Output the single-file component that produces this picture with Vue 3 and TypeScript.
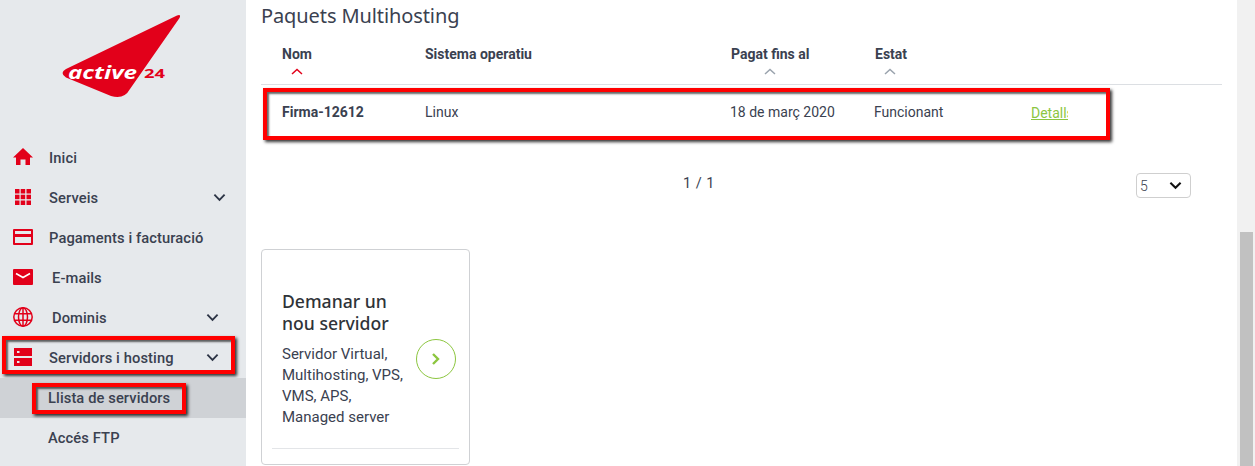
<script setup lang="ts">
const rows = [
  { name: "Firma-12612", os: "Linux", paid: "18 de març 2020", status: "Funcionant" },
];
const columns = [
  { label: "Nom", sortable: true, active: true },
  { label: "Sistema operatiu", sortable: false, active: false },
  { label: "Pagat fins al", sortable: true, active: false },
  { label: "Estat", sortable: true, active: false },
];
</script>

<template>
  <div class="page">
    <aside class="sidebar">
      <div class="logo">
        <svg width="246" height="138" viewBox="0 0 246 138">
          <path d="M177 15.500 Q181.500 14 179.500 18 L130 89 Q124 100 111 96 L66 77.500 Q59 73 66 69 Z" fill="#e2001a" />
          <text x="68" y="79" class="logo-word" textLength="69" lengthAdjust="spacingAndGlyphs">active</text>
          <text x="144" y="78" class="logo-num" textLength="21" lengthAdjust="spacingAndGlyphs">24</text>
        </svg>
      </div>
      <nav class="nav">
        <a class="item">
          <svg class="icon" viewBox="0 0 24 24"><path d="M12 2 2 11.500h3V19h4.500v-5.500h5V19H19v-7.500h3z" fill="#e2001a" /></svg>
          <span>Inici</span>
        </a>
        <a class="item">
          <svg class="icon" viewBox="0 0 24 24" fill="#e2001a">
            <rect x="4" y="3" width="4.500" height="4.500" /><rect x="9.700" y="3" width="4.500" height="4.500" /><rect x="15.500" y="3" width="4.500" height="4.500" />
            <rect x="4" y="8.700" width="4.500" height="4.500" /><rect x="9.700" y="8.700" width="4.500" height="4.500" /><rect x="15.500" y="8.700" width="4.500" height="4.500" />
            <rect x="4" y="14.500" width="4.500" height="4.500" /><rect x="9.700" y="14.500" width="4.500" height="4.500" /><rect x="15.500" y="14.500" width="4.500" height="4.500" />
          </svg>
          <span>Serveis</span>
          <svg class="chev" viewBox="0 0 14 9"><path d="M1.500 1.500 7 7l5.500-5.500" /></svg>
        </a>
        <a class="item">
          <svg class="icon" viewBox="0 0 24 24"><path fill-rule="evenodd" d="M3 3h18a1 1 0 0 1 1 1v14a1 1 0 0 1-1 1H3a1 1 0 0 1-1-1V4a1 1 0 0 1 1-1zM4 5v3h16V5zM4 11v6h16v-6z" fill="#e2001a" /></svg>
          <span>Pagaments i facturació</span>
        </a>
        <a class="item shifted">
          <svg class="icon" viewBox="0 0 24 24">
            <rect x="2" y="3" width="20" height="16" rx="1" fill="#e2001a" />
            <path d="M5 7.500 12 11.500l7-4" fill="none" stroke="#fff" stroke-width="1.600" />
          </svg>
          <span>E-mails</span>
        </a>
        <a class="item shifted">
          <svg class="icon" viewBox="0 0 24 24" fill="none" stroke="#e2001a" stroke-width="1.500">
            <circle cx="12" cy="11" r="9.200" />
            <ellipse cx="12" cy="11" rx="4.500" ry="9.200" />
            <path d="M3.300 7.800h17.400M3.300 14.200h17.400M12 2v18" />
          </svg>
          <span>Dominis</span>
          <svg class="chev" viewBox="0 0 14 9"><path d="M1.500 1.500 7 7l5.500-5.500" /></svg>
        </a>
        <a class="item">
          <svg class="icon" viewBox="0 0 24 24">
            <path fill-rule="evenodd" d="M3 2h18v8H3zM6 5v2h2.500V5zM3 12h18v8H3zM6 15v2h2.500v-2z" fill="#e2001a" />
          </svg>
          <span>Servidors i hosting</span>
          <svg class="chev" viewBox="0 0 14 9"><path d="M1.500 1.500 7 7l5.500-5.500" /></svg>
          <i class="mark mark-nav"></i>
        </a>
        <a class="sub active">
          <span>Llista de servidors</span>
          <i class="mark mark-sub"></i>
        </a>
        <a class="sub">
          <span>Accés FTP</span>
        </a>
      </nav>
    </aside>

    <main class="main">
      <h1 class="title">Paquets Multihosting</h1>
      <div class="table-head">
        <div v-for="col in columns" :key="col.label" class="th">
          <span>{{ col.label }}</span>
          <svg v-if="col.sortable" class="sort" :class="{ on: col.active }" viewBox="0 0 12 7"><path d="M1 6 6 1.500 11 6" /></svg>
        </div>
      </div>
      <div v-for="row in rows" :key="row.name" class="table-row">
        <strong>{{ row.name }}</strong>
        <span>{{ row.os }}</span>
        <span class="paid">{{ row.paid }}</span>
        <span class="status">{{ row.status }}</span>
        <div class="link-wrap"><a class="link">Detalls</a></div>
        <i class="mark mark-row"></i>
      </div>

      <div class="pager">
        <span class="pages">1 / 1</span>
        <div class="per-page">
          <span>5</span>
          <svg viewBox="0 0 14 9"><path d="M1.500 1.500 7 7l5.500-5.500" /></svg>
        </div>
      </div>

      <div class="card">
        <div class="card-body">
          <div class="card-text">
            <h2>Demanar un nou servidor</h2>
            <p>Servidor Virtual, Multihosting, VPS, VMS, APS, Managed server</p>
          </div>
          <div class="go">
            <svg viewBox="0 0 10 14"><path d="M2 2l5 5-5 5" /></svg>
          </div>
        </div>
        <div class="card-foot"></div>
      </div>
    </main>

    <div class="scrollbar"><div class="thumb"></div></div>
  </div>
</template>

<style>
html,
body {
  margin: 0;
  overflow: hidden;
}
</style>

<style scoped>
.page {
  display: flex;
  width: 1255px;
  height: 466px;
  overflow: hidden;
  background: #fff;
  font-family: Roboto, "Liberation Sans", sans-serif;
  color: #3a4150;
}

.sidebar {
  width: 246px;
  flex: none;
  background: #e6e9ec;
}

.logo {
  height: 138px;
}

.logo svg {
  display: block;
}

.logo-word {
  font: italic 700 18px "Open Sans", sans-serif;
  fill: #fff;
}

.logo-num {
  font: 700 12px "Open Sans", sans-serif;
  fill: #e2001a;
}

.item {
  position: relative;
  display: flex;
  align-items: center;
  height: 40px;
  padding-left: 49px;
  font-size: 14.7px;
  font-weight: 500;
  letter-spacing: 0.1px;
}

.item.shifted {
  padding-left: 52px;
}

.icon {
  position: absolute;
  left: 11px;
  top: 8px;
  width: 24px;
  height: 24px;
}

.chev {
  position: absolute;
  left: 213px;
  top: 15px;
  width: 13px;
  height: 9px;
  fill: none;
  stroke: #2c3445;
  stroke-width: 2;
}

.item.shifted .chev,
.item:nth-child(6) .chev {
  left: 206px;
}

.sub {
  position: relative;
  display: flex;
  align-items: center;
  height: 40px;
  padding-left: 48px;
  font-size: 14.7px;
  font-weight: 500;
  letter-spacing: 0.1px;
}

.sub.active {
  background: #cfd2d6;
}

.mark {
  position: absolute;
  box-sizing: border-box;
  border: 4px solid #f00;
  box-shadow: 2px 2px 3px rgba(0, 0, 0, 0.8), inset 2px 2px 2px rgba(0, 0, 0, 0.6);
  pointer-events: none;
}

.mark-nav {
  left: 2px;
  top: -2px;
  width: 233px;
  height: 38px;
}

.mark-sub {
  left: 32px;
  top: 5px;
  width: 154px;
  height: 31px;
}

.mark-row {
  left: 2px;
  top: 3px;
  width: 847px;
  height: 52px;
}

.main {
  flex: 1;
  min-width: 0;
  padding: 0 15px;
}

.title {
  margin: 0;
  height: 32px;
  font-size: 20px;
  line-height: 32px;
  font-weight: 400;
  letter-spacing: -0.1px;
  color: #3a4150;
  font-family: "Noto Sans", sans-serif;
}

.table-head {
  display: grid;
  grid-template-columns: 143px 306px 144px 1fr;
  height: 52px;
  padding-left: 21px;
  border-bottom: 1px solid #dcdfe3;
  width: 940px;
}

.th {
  display: flex;
  flex-direction: column;
  align-items: flex-start;
  padding-top: 13px;
  font-size: 14px;
  line-height: 18px;
  font-weight: 700;
}

.sort {
  width: 12px;
  height: 7px;
  margin: 5px 0 0 9px;
  fill: none;
  stroke: #9aa3ad;
  stroke-width: 1.500;
}

.th:nth-child(3) .sort {
  margin-left: 33px;
}

.sort.on {
  stroke: #e2001a;
}

.table-row {
  position: relative;
  display: grid;
  grid-template-columns: 143px 305px 144px 157px 37px;
  align-items: center;
  height: 54px;
  padding-left: 21px;
  font-size: 14px;
}

.link-wrap {
  overflow: hidden;
  width: 37px;
  padding-top: 2px;
}

.link {
  color: #8cc63f;
  text-decoration: underline;
  white-space: nowrap;
  font-size: 14px;
}

.pager {
  position: relative;
  display: flex;
  justify-content: center;
  align-items: center;
  width: 876px;
  height: 28px;
  margin-top: 30px;
  font-size: 14.5px;
  letter-spacing: 0.5px;
}

.per-page {
  position: absolute;
  left: 875px;
  top: 4px;
  box-sizing: border-box;
  width: 55px;
  height: 25px;
  display: flex;
  align-items: center;
  justify-content: space-between;
  padding: 0 8px 0 3px;
  border: 1px solid #cfcfcf;
  border-radius: 4px;
  font-size: 14px;
  font-weight: 300;
}

.per-page svg {
  width: 13px;
  height: 9px;
  fill: none;
  stroke: #111;
  stroke-width: 2.200;
}

.card {
  box-sizing: border-box;
  width: 209px;
  height: 216px;
  margin-top: 52px;
  padding: 0 10px;
  border: 1px solid #cfd1d4;
  border-radius: 4px;
}

.card-body {
  position: relative;
  height: 198px;
  padding: 40px 0 0 10px;
  box-sizing: border-box;
}

.card-text {
  width: 130px;
}

h2 {
  margin: 0 0 10px;
  font-size: 17.600px;
  line-height: 22px;
  font-weight: 500;
  color: #2f3338;
  font-family: "Noto Sans", sans-serif;
}

p {
  margin: 0;
  font-size: 15px;
  line-height: 21px;
}

.go {
  position: absolute;
  left: 144px;
  top: 89px;
  box-sizing: border-box;
  width: 40px;
  height: 40px;
  display: flex;
  align-items: center;
  justify-content: center;
  border: 1px solid #8cc63f;
  border-radius: 50%;
}

.go svg {
  width: 10px;
  height: 14px;
  fill: none;
  stroke: #8cc63f;
  stroke-width: 2.400;
}

.card-foot {
  border-top: 1px solid #e3e5e8;
}

.scrollbar {
  width: 18px;
  flex: none;
  display: flex;
  flex-direction: column;
  justify-content: flex-end;
  align-items: center;
  background: #f1f1f1;
}

.thumb {
  width: 13px;
  height: 234px;
  background: #c1c1c1;
}
</style>
